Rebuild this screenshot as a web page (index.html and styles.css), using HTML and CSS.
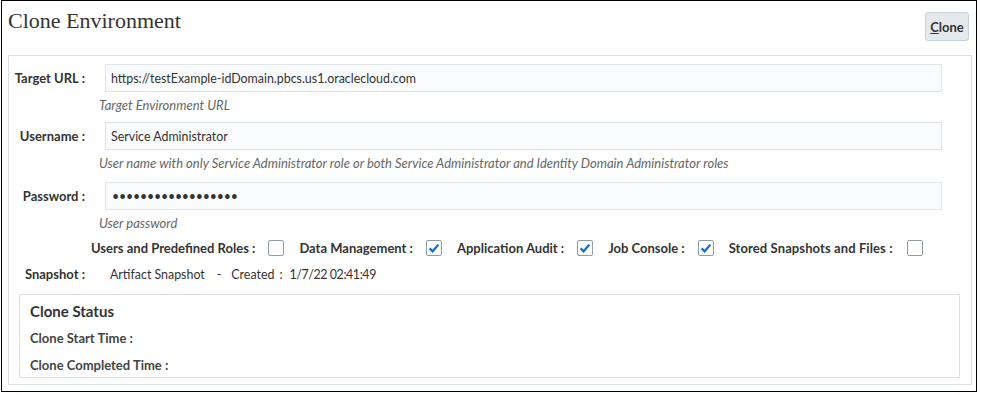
FILE: index.html
```html
<!DOCTYPE html>
<html lang="en">
<head>
<meta charset="utf-8">
<title>Clone Environment</title>
<link rel="stylesheet" href="styles.css">
</head>
<body>
<div class="frame">
  <div class="header">
    <h1 class="title">Clone Environment</h1>
    <button class="btn" type="button"><span class="u">C</span>lone</button>
  </div>
  <div class="panel">
    <div class="field f1">
      <label class="lbl">Target URL :</label>
      <div class="ctl">
        <input class="inp" type="text" value="https://testExample-idDomain.pbcs.us1.oraclecloud.com" readonly>
        <div class="help">Target Environment URL</div>
      </div>
    </div>
    <div class="field f2">
      <label class="lbl">Username :</label>
      <div class="ctl">
        <input class="inp" type="text" value="Service Administrator" readonly>
        <div class="help">User name with only Service Administrator role or both Service Administrator and Identity Domain Administrator roles</div>
      </div>
    </div>
    <div class="field f3">
      <label class="lbl">Password :</label>
      <div class="ctl">
        <input class="inp pw" type="password" value="abcdefghijklmnopqr" readonly>
        <div class="help">User password</div>
      </div>
    </div>
    <div class="checks">
      <span class="clbl">Users and Predefined Roles :</span>
      <span class="cb"></span>
      <span class="clbl">Data Management :</span>
      <span class="cb on"><svg viewBox="0 0 16 16" width="16" height="16"><path d="M3.6 8.4 L6.6 11.3 L12.4 4.6" fill="none" stroke="#0a6fd1" stroke-width="2.2"/></svg></span>
      <span class="clbl">Application Audit :</span>
      <span class="cb on"><svg viewBox="0 0 16 16" width="16" height="16"><path d="M3.6 8.4 L6.6 11.3 L12.4 4.6" fill="none" stroke="#0a6fd1" stroke-width="2.2"/></svg></span>
      <span class="clbl">Job Console :</span>
      <span class="cb on"><svg viewBox="0 0 16 16" width="16" height="16"><path d="M3.6 8.4 L6.6 11.3 L12.4 4.6" fill="none" stroke="#0a6fd1" stroke-width="2.2"/></svg></span>
      <span class="clbl last">Stored Snapshots and Files :</span>
      <span class="cb"></span>
    </div>
    <div class="snap">
      <span class="lbl">Snapshot :</span>
      <span class="val">Artifact Snapshot<span class="sep">-</span>Created<span class="colon">:</span><span class="date">1/7/22 02:41:49</span></span>
    </div>
    <div class="status">
      <h2 class="st-title">Clone Status</h2>
      <div class="st-row">Clone Start Time :</div>
      <div class="st-row">Clone Completed Time :</div>
    </div>
  </div>
</div>
</body>
</html>
```
FILE: styles.css
```css
html, body {
  margin: 0;
  padding: 0;
  background: #fff;
}
body {
  font-family: Lato, "Noto Sans", sans-serif;
  color: #333;
  font-size: 13px;
}
.frame {
  margin-left: 1px;
  width: 976px;
  height: 392px;
  box-sizing: border-box;
  border: 1px solid #000;
  padding: 0 4px 0 6px;
}
.header {
  height: 54px;
  display: flex;
  justify-content: space-between;
  align-items: flex-start;
}
.title {
  margin: 7px 0 0 0;
  font-family: "Liberation Serif", serif;
  font-weight: normal;
  font-size: 22px;
  line-height: 26px;
  color: #333;
}
.btn {
  margin: 11px 3px 0 0;
  width: 44px;
  height: 29px;
  padding: 0;
  border: 1px solid #c6d0d8;
  border-radius: 3px;
  background: #e5e9ec;
  font-family: Lato, sans-serif;
  font-weight: bold;
  font-size: 13px;
  color: #333;
}
.u { text-decoration: underline; }
.panel {
  height: 330px;
  box-sizing: border-box;
  border: 1px solid #d9e1e7;
  padding-top: 8px;
}
.field {
  display: flex;
  align-items: flex-start;
}
.f2 { margin-top: 8px; }
.f3 { margin-top: 10px; }
.lbl {
  width: 76px;
  flex: none;
  text-align: right;
  font-weight: bold;
  font-size: 13px;
  line-height: 28px;
  margin-right: 20px;
  color: #333;
}
.ctl { flex: none; width: 837px; }
.inp {
  display: block;
  width: 837px;
  height: 28px;
  box-sizing: border-box;
  border: 1px solid #dfe5ea;
  background: #fafbfc;
  padding: 0 5px;
  font-family: Lato, sans-serif;
  font-size: 12.4px;
  color: #333;
  outline: none;
  margin: 0;
}
.pw { letter-spacing: -0.2px; padding-left: 6px; }
.help {
  margin: 4px 0 0 -6px;
  font-style: italic;
  font-size: 13px;
  line-height: 18px;
  color: #666;
}
.checks {
  display: flex;
  align-items: center;
  height: 20px;
  margin-top: 6px;
  padding-left: 82px;
}
.clbl {
  font-weight: bold;
  font-size: 13px;
  color: #333;
  margin-right: 13px;
}
.clbl.last { letter-spacing: 0.1px; margin-right: 14px; }
.cb {
  width: 16px;
  height: 16px;
  box-sizing: border-box;
  border: 1px solid #8f9ba6;
  border-radius: 2px;
  background: #fff;
  margin-right: 15px;
  position: relative;
}
.cb svg {
  position: absolute;
  left: -1px;
  top: -1px;
}
.snap {
  display: flex;
  align-items: center;
  height: 20px;
  margin-top: 6px;
}
.snap .lbl { line-height: 20px; }
.val {
  padding-left: 5px;
  font-size: 12.4px;
}
.sep { margin: 0 10px 0 12px; }
.colon { margin: 0 7px 0 5px; }
.date { letter-spacing: -0.4px; }
.status {
  margin: 10px 0 0 10px;
  width: 941px;
  height: 84px;
  box-sizing: border-box;
  border: 1px solid #d9e1e7;
  padding: 6px 0 0 10px;
}
.st-title {
  margin: 0;
  font-size: 15px;
  line-height: 20px;
  font-weight: bold;
  color: #333;
}
.st-row {
  margin-top: 7px;
  font-size: 13px;
  line-height: 20px;
  font-weight: bold;
  color: #444;
}
```
